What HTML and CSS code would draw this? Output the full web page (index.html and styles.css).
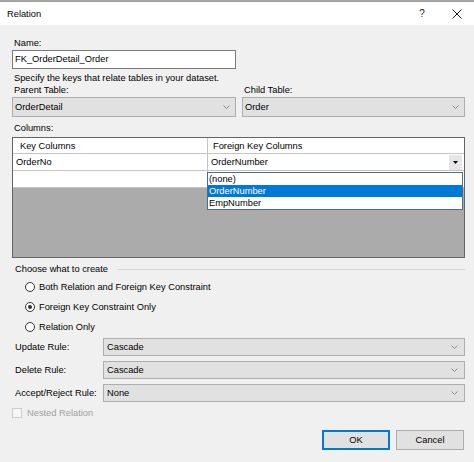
FILE: index.html
```html
<!DOCTYPE html>
<html>
<head>
<meta charset="utf-8">
<title>Relation</title>
<link rel="stylesheet" href="styles.css">
</head>
<body>
<div class="window">
  <div class="titlebar">
    <span class="title">Relation</span>
    <span class="tb-btns">
      <span class="tb-help">?</span>
      <span class="tb-close"><svg width="10" height="10" viewBox="0 0 10 10"><path d="M0.5 0.5 L9.5 9.5 M9.5 0.5 L0.5 9.5" stroke="#1a1a1a" stroke-width="1" fill="none"/></svg></span>
    </span>
  </div>
  <div class="content">
    <div class="lbl lbl-name">Name:</div>
    <div class="textbox">FK_OrderDetail_Order</div>
    <div class="lbl lbl-spec">Specify the keys that relate tables in your dataset.</div>
    <div class="tables">
      <div class="tcol tcol-left">
        <div class="lbl">Parent Table:</div>
        <div class="combo"><span class="combo-text">OrderDetail</span><svg class="chev" width="7" height="4" viewBox="0 0 7 4"><path d="M0.5 0.5 L3.5 3.5 L6.5 0.5" stroke="#8a8a8a" stroke-width="1" fill="none"/></svg></div>
      </div>
      <div class="tcol tcol-right">
        <div class="lbl">Child Table:</div>
        <div class="combo"><span class="combo-text">Order</span><svg class="chev" width="7" height="4" viewBox="0 0 7 4"><path d="M0.5 0.5 L3.5 3.5 L6.5 0.5" stroke="#8a8a8a" stroke-width="1" fill="none"/></svg></div>
      </div>
    </div>
    <div class="lbl lbl-cols">Columns:</div>
    <div class="grid">
      <div class="grow ghead">
        <div class="gc c1 hc1">Key Columns</div>
        <div class="gc c2 hc2">Foreign Key Columns</div>
      </div>
      <div class="grow gdata">
        <div class="gc c1 dc1">OrderNo</div>
        <div class="gc c2 dc2"><span class="cell-text">OrderNumber</span><span class="dd-btn"><svg width="5" height="3" viewBox="0 0 5 3"><path d="M0 0 L5 0 L2.5 3 Z" fill="#000"/></svg></span></div>
      </div>
      <div class="grow gdata">
        <div class="gc c1"></div>
        <div class="gc c2"></div>
      </div>
      <div class="gempty"></div>
      <div class="dropdown">
        <div class="dd-item">(none)</div>
        <div class="dd-item dd-sel">OrderNumber</div>
        <div class="dd-item">EmpNumber</div>
      </div>
    </div>
    <div class="group-head"><span class="group-title">Choose what to create</span><span class="group-line"></span></div>
    <div class="radios">
      <div class="radio"><span class="rb"></span><span>Both Relation and Foreign Key Constraint</span></div>
      <div class="radio"><span class="rb rb-on"><span class="rb-dot"></span></span><span>Foreign Key Constraint Only</span></div>
      <div class="radio"><span class="rb"></span><span>Relation Only</span></div>
    </div>
    <div class="rules">
      <div class="rule">
        <span class="rule-lbl">Update Rule:</span>
        <div class="combo rule-combo"><span class="combo-text">Cascade</span><svg class="chev" width="7" height="4" viewBox="0 0 7 4"><path d="M0.5 0.5 L3.5 3.5 L6.5 0.5" stroke="#8a8a8a" stroke-width="1" fill="none"/></svg></div>
      </div>
      <div class="rule">
        <span class="rule-lbl">Delete Rule:</span>
        <div class="combo rule-combo"><span class="combo-text">Cascade</span><svg class="chev" width="7" height="4" viewBox="0 0 7 4"><path d="M0.5 0.5 L3.5 3.5 L6.5 0.5" stroke="#8a8a8a" stroke-width="1" fill="none"/></svg></div>
      </div>
      <div class="rule">
        <span class="rule-lbl">Accept/Reject Rule:</span>
        <div class="combo rule-combo"><span class="combo-text">None</span><svg class="chev" width="7" height="4" viewBox="0 0 7 4"><path d="M0.5 0.5 L3.5 3.5 L6.5 0.5" stroke="#8a8a8a" stroke-width="1" fill="none"/></svg></div>
      </div>
    </div>
    <div class="check"><span class="cb"></span><span class="check-text">Nested Relation</span></div>
    <div class="buttons">
      <div class="btn btn-ok">OK</div>
      <div class="btn">Cancel</div>
    </div>
  </div>
</div>
</body>
</html>
```
FILE: styles.css
```css
* { box-sizing: border-box; }
html, body { margin: 0; padding: 0; }
body {
  font-family: "Liberation Sans", Arial, sans-serif;
  font-size: 9.3px;
  color: #000;
  background: #f0f0f0;
}
.window {
  width: 474px;
  height: 462px;
  background: #f0f0f0;
  border-top: 2px solid #a3a3a3;
  overflow: hidden;
}
.titlebar {
  height: 23px;
  background: #fff;
  display: flex;
  align-items: center;
  padding-left: 7px;
  padding-right: 5px;
}
.title { line-height: 12px; }
.tb-btns { margin-left: auto; display: flex; align-items: center; gap: 11px; }
.tb-help { width: 24px; text-align: center; font-size: 10px; line-height: 12px; color: #1a1a1a; }
.tb-close { width: 24px; height: 10px; display: flex; justify-content: center; }
.content { padding: 12px 9px 0 12px; }
.lbl { line-height: 12px; height: 12px; padding-left: 2px; white-space: nowrap; }
.textbox {
  margin-top: 1px;
  width: 224px;
  height: 19px;
  border: 1px solid #7a7a7a;
  background: #fff;
  padding-left: 2px;
  line-height: 17px;
}
.lbl-spec { margin-top: 3px; }
.tables { display: flex; gap: 6px; }
.tcol-left { width: 224px; }
.tcol-right { width: 223px; }
.combo {
  margin-top: 1px;
  height: 20px;
  border: 1px solid #adadad;
  background: #e1e1e1;
  display: flex;
  align-items: center;
  padding-left: 2px;
  padding-right: 5px;
}
.combo-text { flex: 1; line-height: 12px; }
.chev { display: block; }
.lbl-cols { margin-top: 5px; }
.grid {
  position: relative;
  margin-top: 3px;
  width: 453px;
  height: 121px;
  border: 1px solid #646464;
  background: #ababab;
  display: flex;
  flex-direction: column;
}
.grow { display: flex; background: #fff; border-bottom: 1px solid #c4c4c4; }
.ghead { height: 16px; }
.gdata { height: 17px; }
.gc { height: 100%; }
.c1 { width: 195px; border-right: 1px solid #c4c4c4; }
.c2 { flex: 1; }
.hc1 { padding: 2px 0 0 7px; line-height: 13px; }
.hc2 { padding: 2px 0 0 5px; line-height: 13px; }
.dc1 { padding: 1px 0 0 3px; line-height: 15px; }
.dc2 { display: flex; align-items: center; padding-left: 3px; padding-right: 2px; }
.cell-text { flex: 1; line-height: 15px; }
.dd-btn {
  width: 13px;
  height: 15px;
  background: #e6e6e6;
  display: flex;
  align-items: center;
  justify-content: center;
}
.dd-btn svg { display: block; }
.gempty { flex: 1; }
.dropdown {
  position: absolute;
  left: 194px;
  top: 34px;
  width: 256px;
  height: 38px;
  border: 1px solid #4f6a8f;
  background: #fff;
}
.dd-item { height: 12px; line-height: 12px; padding-left: 1px; }
.dd-sel { background: #0078d7; color: #fff; }
.group-head { margin-top: 5px; display: flex; align-items: center; height: 12px; }
.group-title { padding-left: 3px; line-height: 12px; white-space: nowrap; }
.group-line { flex: 1; height: 1px; background: #d5d5d5; margin-left: 9px; }
.radios { margin-top: 2px; padding-left: 13px; }
.radio { height: 20px; display: flex; align-items: center; line-height: 20px; }
.rb {
  width: 10px;
  height: 10px;
  border: 1px solid #333;
  border-radius: 50%;
  background: #fff;
  margin-right: 4px;
  display: flex;
  align-items: center;
  justify-content: center;
}
.rb-dot { width: 4px; height: 4px; border-radius: 50%; background: #333; }
.rules { margin-top: 1px; display: flex; flex-direction: column; gap: 5px; }
.rule { display: flex; align-items: center; height: 18px; }
.rule-lbl { width: 91px; padding-left: 3px; line-height: 12px; white-space: nowrap; }
.rule-combo { margin-top: 0; flex: 1; height: 18px; padding-left: 3px; padding-right: 6px; }
.check { margin-top: 6px; display: flex; align-items: center; height: 10px; }
.cb { width: 10px; height: 10px; border: 1px solid #cccccc; background: #f7f7f7; margin-right: 5px; }
.check-text { color: #a0a0a0; line-height: 12px; }
.buttons { margin-top: 12px; display: flex; justify-content: flex-end; gap: 6px; padding-right: 1px; }
.btn {
  width: 68px;
  height: 20px;
  border: 1px solid #adadad;
  background: #e1e1e1;
  display: flex;
  align-items: center;
  justify-content: center;
  line-height: 12px;
}
.btn-ok { border: 2px solid #0078d7; }
```
